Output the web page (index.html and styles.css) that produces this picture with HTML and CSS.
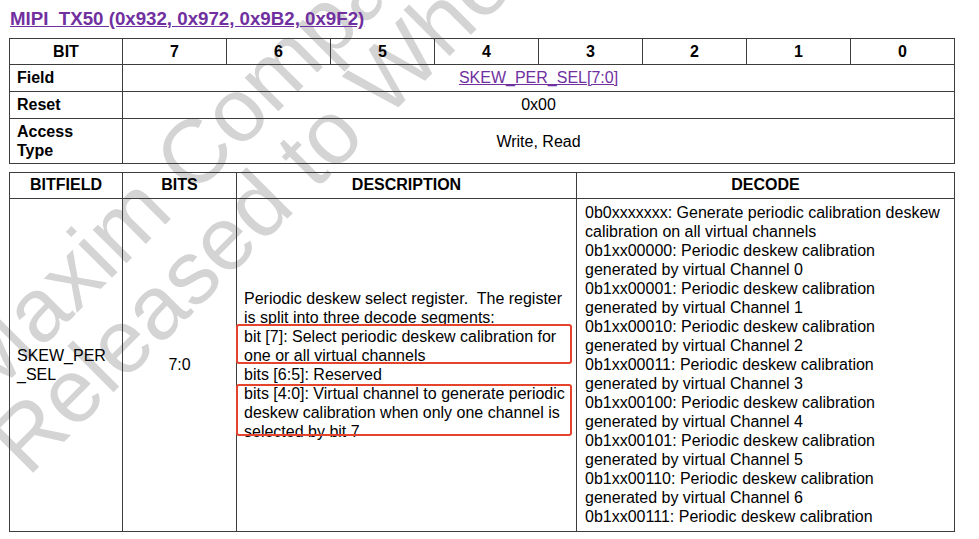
FILE: index.html
```html
<!DOCTYPE html>
<html>
<head>
  <meta charset="UTF-8">
  <title>MIPI_TX50 Register</title>
  <link rel="stylesheet" href="styles.css">
</head>
<body>
  <div class="page">
    <div class="watermark">
      <div class="wm-line wm-first">Maxim Company Confidential</div>
      <div class="wm-line">Released to Whetstone Under NDA</div>
    </div>

    <h1 class="reg-title"><a href="#">MIPI_TX50 (0x932, 0x972, 0x9B2, 0x9F2)</a></h1>

    <table class="reg-map">
      <colgroup>
        <col class="col-label">
        <col span="8" class="col-bit">
      </colgroup>
      <tr class="row-head">
        <th>BIT</th>
        <th>7</th><th>6</th><th>5</th><th>4</th><th>3</th><th>2</th><th>1</th><th>0</th>
      </tr>
      <tr class="row-field">
        <th class="label">Field</th>
        <td colspan="8"><a class="field-link" href="#">SKEW_PER_SEL[7:0]</a></td>
      </tr>
      <tr class="row-reset">
        <th class="label">Reset</th>
        <td colspan="8">0x00</td>
      </tr>
      <tr class="row-access">
        <th class="label">Access<br>Type</th>
        <td colspan="8">Write, Read</td>
      </tr>
    </table>

    <table class="bitfields">
      <colgroup>
        <col class="col-name">
        <col class="col-bits">
        <col class="col-desc">
        <col class="col-decode">
      </colgroup>
      <tr class="row-head">
        <th>BITFIELD</th>
        <th>BITS</th>
        <th>DESCRIPTION</th>
        <th>DECODE</th>
      </tr>
      <tr class="row-body">
        <td class="name">SKEW_PER<br>_SEL</td>
        <td class="bits">7:0</td>
        <td class="desc">
          <div>Periodic deskew select register.&nbsp; The register is split into three decode segments:</div>
          <div class="seg boxed boxed-a">bit [7]: Select periodic deskew calibration for one or all virtual channels</div>
          <div>bits [6:5]: Reserved</div>
          <div class="seg boxed boxed-b">bits [4:0]: Virtual channel to generate periodic deskew calibration when only one channel is selected by bit 7</div>
        </td>
        <td class="decode">
          <div>0b0xxxxxxx: Generate periodic calibration deskew calibration on all virtual channels</div>
          <div>0b1xx00000: Periodic deskew calibration generated by virtual Channel 0</div>
          <div>0b1xx00001: Periodic deskew calibration generated by virtual Channel 1</div>
          <div>0b1xx00010: Periodic deskew calibration generated by virtual Channel 2</div>
          <div>0b1xx00011: Periodic deskew calibration generated by virtual Channel 3</div>
          <div>0b1xx00100: Periodic deskew calibration generated by virtual Channel 4</div>
          <div>0b1xx00101: Periodic deskew calibration generated by virtual Channel 5</div>
          <div>0b1xx00110: Periodic deskew calibration generated by virtual Channel 6</div>
          <div>0b1xx00111: Periodic deskew calibration</div>
        </td>
      </tr>
    </table>
  </div>
</body>
</html>
```

FILE: styles.css
```css
body {
  margin: 0;
  font-family: "Liberation Sans", Arial, sans-serif;
  color: #000;
  background: #fff;
}

.page {
  position: relative;
  height: 539px;
  overflow: hidden;
  padding: 8px 0 0 9px;
  box-sizing: border-box;
}

/* diagonal "confidential" stamp behind the tables */
.watermark {
  position: absolute;
  left: -81px;
  top: 369px;
  transform: rotate(-45deg);
  transform-origin: 0 0;
  white-space: nowrap;
  font-size: 90px;
  line-height: 82px;
  color: #d4d4d4;
  z-index: 0;
}

.wm-first {
  padding-left: 25px;
}

.reg-title {
  position: relative;
  z-index: 1;
  margin: 0 0 8px 1px;
  font-size: 18.7px;
  line-height: 22px;
  font-weight: bold;
}

.reg-title a,
.field-link {
  color: #7030a0;
  text-decoration: underline;
}

table {
  position: relative;
  z-index: 1;
  border-collapse: collapse;
  table-layout: fixed;
  width: 945px;
  font-size: 16px;
  line-height: 19px;
}

th,
td {
  border: 1px solid #3c3c3c;
  padding: 3px 7px;
  text-align: center;
  vertical-align: middle;
}

th {
  font-weight: bold;
}

th.label {
  text-align: left;
}

.col-label { width: 113px; }
.col-bit { width: 104px; }

.reg-map .row-field td,
.reg-map .row-field th,
.reg-map .row-reset td,
.reg-map .row-reset th {
  padding-top: 3px;
  padding-bottom: 4px;
}

.bitfields {
  margin-top: 8px;
}

.bitfields .row-head th {
  padding: 2px 7px 4px;
}

.col-name { width: 113px; }
.col-bits { width: 114px; }
.col-desc { width: 340px; }
.col-decode { width: 378px; }

.row-body td {
  padding: 4px 7px 5px;
}

.name,
.desc,
.decode {
  text-align: left;
}

.decode {
  vertical-align: top;
}

.row-body .decode {
  padding: 4px 8px 5px;
}

.seg {
  position: relative;
}

/* red review markers drawn over the description text */
.boxed::after {
  content: "";
  position: absolute;
  left: -8px;
  right: -3px;
  border: 2px solid #e5432b;
  border-radius: 3px;
}

.boxed-a::after {
  top: -3px;
  bottom: 1px;
}

.boxed-b::after {
  top: 0;
  bottom: 5px;
}
```
